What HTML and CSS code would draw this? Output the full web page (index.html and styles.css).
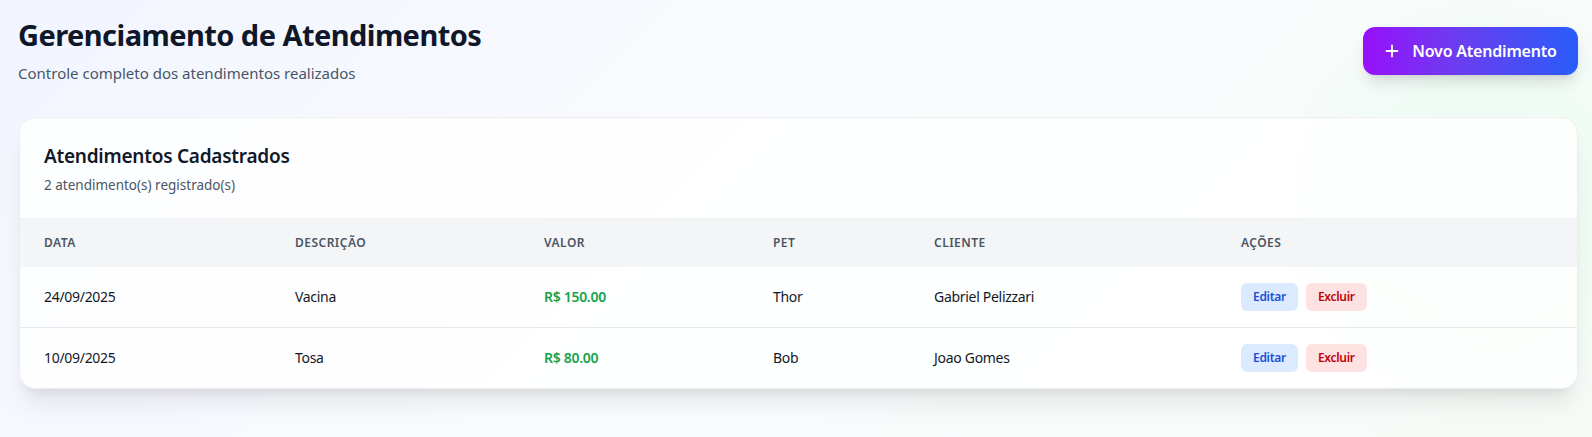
FILE: index.html
```html
<!DOCTYPE html>
<html lang="pt-BR">
<head>
<meta charset="utf-8">
<title>Gerenciamento de Atendimentos</title>
<link rel="stylesheet" href="styles.css">
</head>
<body>
<div class="page">
  <header class="top">
    <div class="top-text">
      <h1 class="title">Gerenciamento de Atendimentos</h1>
      <p class="subtitle">Controle completo dos atendimentos realizados</p>
    </div>
    <button class="btn-new">
      <svg class="plus" viewBox="0 0 16 16" width="16" height="16" aria-hidden="true"><path d="M8 2.5v11M2.5 8h11" stroke="currentColor" stroke-width="1.8" stroke-linecap="round" fill="none"/></svg>
      <span>Novo Atendimento</span>
    </button>
  </header>

  <section class="card">
    <div class="card-head">
      <h2 class="card-title">Atendimentos Cadastrados</h2>
      <p class="card-sub">2 atendimento(s) registrado(s)</p>
    </div>
    <table class="table">
      <colgroup>
        <col class="c1"><col class="c2"><col class="c3"><col class="c4"><col class="c5"><col class="c6">
      </colgroup>
      <thead>
        <tr>
          <th>Data</th><th>Descrição</th><th>Valor</th><th>Pet</th><th>Cliente</th><th>Ações</th>
        </tr>
      </thead>
      <tbody>
        <tr>
          <td>24/09/2025</td><td>Vacina</td><td class="money">R$ 150.00</td><td>Thor</td><td>Gabriel Pelizzari</td>
          <td><div class="actions"><button class="btn-edit">Editar</button><button class="btn-del">Excluir</button></div></td>
        </tr>
        <tr>
          <td>10/09/2025</td><td>Tosa</td><td class="money">R$ 80.00</td><td>Bob</td><td>Joao Gomes</td>
          <td><div class="actions"><button class="btn-edit">Editar</button><button class="btn-del">Excluir</button></div></td>
        </tr>
      </tbody>
    </table>
  </section>
</div>
</body>
</html>
```
FILE: styles.css
```css
* { box-sizing: border-box; }
html, body { margin: 0; padding: 0; }
body {
  font-family: "Noto Sans", "Open Sans", sans-serif;
  color: #111827;
  min-height: 437px;
  background:
    radial-gradient(circle at 1480px 200px, rgba(220, 252, 231, 0.55), rgba(220, 252, 231, 0) 220px),
    linear-gradient(135deg, #f2f5fe 0%, #fafbfe 45%, #f6fbf7 100%);
}
.page {
  padding: 17px 14px 40px 18px;
}
.top {
  display: flex;
  justify-content: space-between;
  align-items: flex-start;
}
.title {
  margin: 0;
  font-size: 29px;
  line-height: 36px;
  font-weight: 700;
  color: #0f172a;
  letter-spacing: -0.55px;
}
.subtitle {
  margin: 8px 0 0;
  font-size: 15px;
  line-height: 24px;
  color: #475569;
}
.btn-new {
  margin-top: 10px;
  width: 215px;
  height: 48px;
  border: 0;
  border-radius: 12px;
  background: linear-gradient(90deg, #9810fa 0%, #6a3ef0 45%, #2a5cfb 100%);
  color: #fff;
  font-family: inherit;
  font-size: 16px;
  font-weight: 600;
  letter-spacing: -0.2px;
  display: flex;
  align-items: center;
  justify-content: center;
  gap: 12px;
  box-shadow: 0 10px 15px -3px rgba(0,0,0,0.12), 0 4px 6px -4px rgba(0,0,0,0.1);
  cursor: pointer;
}
.plus { display: block; }
.card {
  margin: 32px 0 0 1px;
  background: rgba(255,255,255,0.82);
  border: 1px solid #eceef2;
  border-radius: 16px;
  box-shadow: 0 20px 25px -5px rgba(0,0,0,0.08), 0 8px 10px -6px rgba(0,0,0,0.08);
  overflow: hidden;
}
.card-head {
  padding: 24px 24px 23px;
  border-bottom: 1px solid #eef0f3;
}
.card-title {
  margin: 0;
  font-size: 19px;
  line-height: 28px;
  font-weight: 600;
  letter-spacing: -0.25px;
  color: #111827;
}
.card-sub {
  margin: 5px 0 0;
  font-size: 13.5px;
  line-height: 20px;
  color: #4b5563;
}
.table {
  width: 100%;
  border-collapse: collapse;
  table-layout: fixed;
}
.c1 { width: 251px; }
.c2 { width: 249px; }
.c3 { width: 229px; }
.c4 { width: 161px; }
.c5 { width: 307px; }
.table th {
  background: rgba(243, 244, 246, 0.9);
  text-align: left;
  padding: 16px 24px;
  font-size: 12px;
  line-height: 16px;
  font-weight: 600;
  text-transform: uppercase;
  letter-spacing: 0.04em;
  color: #4b5563;
}
.table td {
  padding: 16px 24px;
  font-size: 14px;
  line-height: 20px;
  letter-spacing: -0.3px;
  color: #111827;
  height: 60px;
  vertical-align: middle;
}
.table tbody tr + tr td { border-top: 1px solid #e5e7eb; }
.money {
  color: #16a34a !important;
  font-weight: 600;
}
.actions {
  display: flex;
  gap: 8px;
}
.btn-edit, .btn-del {
  border: 0;
  border-radius: 6px;
  padding: 6px 12px;
  font-family: inherit;
  font-size: 12px;
  line-height: 16px;
  font-weight: 600;
  letter-spacing: -0.3px;
  cursor: pointer;
}
.btn-edit { background: #dbeafe; color: #1d4ed8; }
.btn-del { background: #fee2e2; color: #c10007; }
```
